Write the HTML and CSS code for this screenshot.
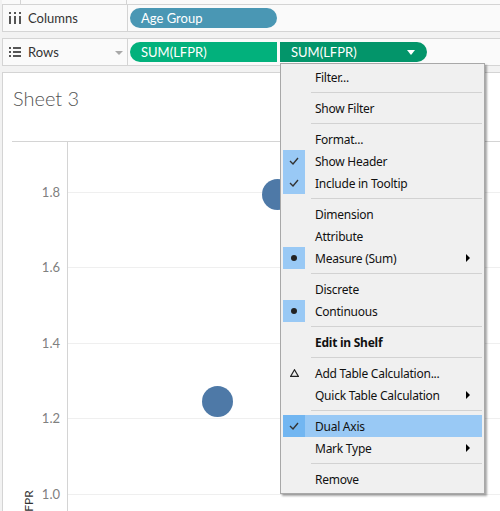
FILE: index.html
```html
<!DOCTYPE html>
<html>
<head>
<meta charset="utf-8">
<link rel="stylesheet" href="styles.css">
</head>
<body>
<div class="topstrip"><div class="ts-a"></div><div class="ts-b"></div><div class="ts-c"></div></div>

<div class="shelf">
  <div class="shelf-label">
    <svg class="ico" width="12" height="12" viewBox="0 0 12 12"><rect x="0" y="0" width="2" height="2" fill="#555"/><rect x="5" y="0" width="2" height="2" fill="#555"/><rect x="10" y="0" width="2" height="2" fill="#555"/><rect x="0" y="4" width="2" height="8" fill="#555"/><rect x="5" y="4" width="2" height="8" fill="#555"/><rect x="10" y="4" width="2" height="8" fill="#555"/></svg>
    <span class="lbl">Columns</span>
  </div>
  <div class="shelf-drop">
    <div class="pill pill-blue">Age Group</div>
  </div>
</div>

<div class="shelf">
  <div class="shelf-label">
    <svg class="ico" width="12" height="10" viewBox="0 0 12 10"><rect x="0" y="0" width="2" height="2" fill="#555"/><rect x="4" y="0" width="8" height="2" fill="#555"/><rect x="0" y="4" width="2" height="2" fill="#555"/><rect x="4" y="4" width="8" height="2" fill="#555"/><rect x="0" y="8" width="2" height="2" fill="#555"/><rect x="4" y="8" width="8" height="2" fill="#555"/></svg>
    <span class="lbl">Rows</span>
    <svg class="dd" width="8" height="4" viewBox="0 0 8 4"><polygon points="0,0 8,0 4,4" fill="#a8a8a8"/></svg>
  </div>
  <div class="shelf-drop">
    <div class="pill pill-green">SUM(LFPR)</div>
    <div class="pill pill-dark">SUM(LFPR)<svg class="pill-dd" width="8" height="5" viewBox="0 0 8 5"><polygon points="0,0 8,0 4,5" fill="#fff"/></svg></div>
  </div>
</div>

<div class="sheet">
  <div class="title">Sheet 3</div>
  <div class="divider"></div>
  <div class="chart">
    <div class="axis-line"></div>
    <div class="grid" style="top:50px"></div>
    <div class="grid" style="top:125px"></div>
    <div class="grid" style="top:201px"></div>
    <div class="grid" style="top:276px"></div>
    <div class="grid" style="top:352px"></div>
    <div class="tick" style="top:42px">1.8</div>
    <div class="tick" style="top:117px">1.6</div>
    <div class="tick" style="top:193px">1.4</div>
    <div class="tick" style="top:268px">1.2</div>
    <div class="tick" style="top:344px">1.0</div>
    <div class="axis-title">LFPR</div>
    <div class="dot" style="left:250px;top:37px"></div>
    <div class="dot" style="left:190px;top:244px"></div>
  </div>
</div>

<div class="menu">
  <div class="item"><span class="chk"></span><span class="txt">Filter...</span></div>
  <div class="sep"></div>
  <div class="item"><span class="chk"></span><span class="txt">Show Filter</span></div>
  <div class="sep"></div>
  <div class="item"><span class="chk"></span><span class="txt">Format...</span></div>
  <div class="item"><span class="chk on"><svg width="10" height="8" viewBox="0 0 10 8"><path d="M1 4 L4 7 L9 1" fill="none" stroke="#333" stroke-width="1.4"/></svg></span><span class="txt">Show Header</span></div>
  <div class="item"><span class="chk on"><svg width="10" height="8" viewBox="0 0 10 8"><path d="M1 4 L4 7 L9 1" fill="none" stroke="#333" stroke-width="1.4"/></svg></span><span class="txt">Include in Tooltip</span></div>
  <div class="sep"></div>
  <div class="item"><span class="chk"></span><span class="txt">Dimension</span></div>
  <div class="item"><span class="chk"></span><span class="txt">Attribute</span></div>
  <div class="item"><span class="chk on"><svg width="6" height="6" viewBox="0 0 6 6"><circle cx="3" cy="3" r="3" fill="#222"/></svg></span><span class="txt">Measure (Sum)</span><svg class="arr" width="4" height="8" viewBox="0 0 4 8"><polygon points="0,0 4,4 0,8" fill="#000"/></svg></div>
  <div class="sep"></div>
  <div class="item"><span class="chk"></span><span class="txt">Discrete</span></div>
  <div class="item"><span class="chk on"><svg width="6" height="6" viewBox="0 0 6 6"><circle cx="3" cy="3" r="3" fill="#222"/></svg></span><span class="txt">Continuous</span></div>
  <div class="sep"></div>
  <div class="item"><span class="chk"></span><span class="txt bold">Edit in Shelf</span></div>
  <div class="sep"></div>
  <div class="item"><span class="chk"><svg width="9" height="8" viewBox="0 0 9 8"><polygon points="4.5,0.8 8.3,7.3 0.7,7.3" fill="none" stroke="#222" stroke-width="1.2"/></svg></span><span class="txt">Add Table Calculation...</span></div>
  <div class="item"><span class="chk"></span><span class="txt">Quick Table Calculation</span><svg class="arr" width="4" height="8" viewBox="0 0 4 8"><polygon points="0,0 4,4 0,8" fill="#000"/></svg></div>
  <div class="sep"></div>
  <div class="item hi"><span class="chk hi-chk"><svg width="10" height="8" viewBox="0 0 10 8"><path d="M1 4 L4 7 L9 1" fill="none" stroke="#333" stroke-width="1.4"/></svg></span><span class="txt">Dual Axis</span></div>
  <div class="item"><span class="chk"></span><span class="txt">Mark Type</span><svg class="arr" width="4" height="8" viewBox="0 0 4 8"><polygon points="0,0 4,4 0,8" fill="#000"/></svg></div>
  <div class="sep"></div>
  <div class="item"><span class="chk"></span><span class="txt">Remove</span></div>
</div>
</body>
</html>
```
FILE: styles.css
```css
* { box-sizing: border-box; }
html, body { margin: 0; padding: 0; }
body {
  width: 500px;
  height: 511px;
  overflow: hidden;
  position: relative;
  background: #f2f2f2;
  font-family: "Lato", "Noto Sans", sans-serif;
}
.topstrip {
  height: 4px;
  display: flex;
  margin-left: 2px;
}
.ts-a { width: 19px; border-right: 1px solid #d4d4d4; background: #fafafa; }
.ts-b { width: 106px; border-right: 1px solid #d4d4d4; background: #fafafa; }
.ts-c { flex: 1; background: #fafafa; }
.shelf {
  display: flex;
  height: 28px;
  margin-left: 2px;
  margin-bottom: 6px;
}
.shelf-label {
  width: 126px;
  border: 1px solid #d4d4d4;
  background: #fafafa;
  display: flex;
  align-items: center;
  padding-left: 6px;
  position: relative;
}
.ico { flex: none; }
.lbl {
  margin-left: 7px;
  font-size: 13px;
  color: #333;
}
.dd { position: absolute; left: 112px; top: 12px; }
.shelf-drop {
  flex: 1;
  border-top: 1px solid #d4d4d4;
  border-bottom: 1px solid #d4d4d4;
  background: #fafafa;
  display: flex;
  align-items: center;
  padding-left: 2px;
  gap: 3px;
}
.pill {
  width: 147px;
  height: 20px;
  border-radius: 10px;
  color: #fff;
  font-size: 13px;
  padding-left: 11px;
  display: flex;
  align-items: center;
  position: relative;
}
.pill-blue { background: #4a97b4; }
.pill-green { background: #02b17c; border-radius: 10px 0 0 10px; }
.pill-dark { background: #03956a; border-radius: 0 10px 10px 0; }
.pill-dd { position: absolute; left: 127px; top: 8px; }
.sheet {
  margin-left: 2px;
  height: 439px;
  background: #fff;
  border-left: 1px solid #d4d4d4;
  border-top: 1px solid #d4d4d4;
  padding-left: 9px;
}
.title {
  height: 68px;
  padding-left: 1px;
  padding-top: 13px;
  font-size: 20px;
  color: #555;
  font-weight: 300;
}
.divider { height: 1px; background: #d4d4d4; }
.chart { position: relative; height: 370px; }
.axis-line {
  position: absolute;
  left: 55px; top: 0; bottom: 0;
  width: 1px; background: #d4d4d4;
}
.grid {
  position: absolute;
  left: 56px; right: 0;
  height: 1px; background: #efefef;
}
.tick {
  position: absolute;
  left: 10px; width: 38px;
  text-align: right;
  font-size: 13px;
  line-height: 16px;
  color: #808080;
}
.axis-title {
  position: absolute;
  left: 10px;
  top: 376px;
  transform: rotate(-90deg);
  transform-origin: left top;
  font-size: 12px;
  color: #333;
  line-height: 14px;
}
.dot {
  position: absolute;
  width: 31px; height: 31px;
  border-radius: 50%;
  background: #4e79a7;
}
.menu {
  position: absolute;
  left: 280px;
  top: 63px;
  width: 205px;
  background: #f0f0f0;
  border: 1px solid #a8a8a8;
  box-shadow: 2px 2px 2px rgba(0,0,0,0.35);
  padding: 2px 2px 3px 2px;
  font-family: "Segoe UI", "Noto Sans", sans-serif;
  font-size: 12px;
  letter-spacing: -0.25px;
  color: #111;
}
.item {
  height: 22px;
  display: flex;
  align-items: center;
  position: relative;
}
.chk {
  width: 22px; height: 22px;
  display: flex;
  align-items: center;
  justify-content: center;
  flex: none;
}
.chk.on { background: #99c9f5; }
.hi { background: #99c9f5; }
.hi-chk { background: #72b6f1; }
.txt { margin-left: 10px; white-space: nowrap; }
.bold { font-weight: bold; }
.arr { position: absolute; left: 183px; top: 7px; }
.sep {
  height: 1px;
  background: #d2d2d2;
  margin: 4px 0 4px 28px;
}
```
